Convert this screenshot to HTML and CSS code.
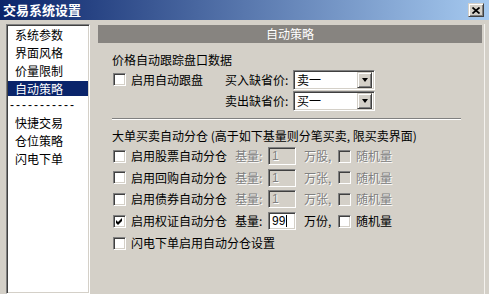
FILE: index.html
```html
<!DOCTYPE html>
<html lang="zh-CN">
<head>
<meta charset="utf-8">
<title>交易系统设置</title>
<link rel="stylesheet" href="styles.css">
</head>
<body>
<div class="window">
  <div class="titlebar">
    <span class="title">交易系统设置</span>
    <span class="close"><svg width="8" height="7" viewBox="0 0 8 7"><path d="M0.5 0.5 L7.5 6.5 M7.5 0.5 L0.5 6.5" stroke="#000" stroke-width="1.7"/></svg></span>
  </div>
  <div class="main">
    <ul class="list">
      <li>系统参数</li>
      <li>界面风格</li>
      <li>价量限制</li>
      <li class="sel">自动策略</li>
      <li class="sep">-----------</li>
      <li>快捷交易</li>
      <li>仓位策略</li>
      <li>闪电下单</li>
    </ul>
    <div class="panel">
      <div class="header">自动策略</div>
      <div class="content">
        <div class="caption">价格自动跟踪盘口数据</div>
        <div class="row">
          <div class="col1"><span class="cb"></span><span class="lbl">启用自动跟盘</span></div>
          <span class="flabel">买入缺省价:</span>
          <div class="select"><span class="sval">卖一</span><span class="sbtn"><span class="tri"></span></span></div>
        </div>
        <div class="row">
          <div class="col1"></div>
          <span class="flabel">卖出缺省价:</span>
          <div class="select"><span class="sval">买一</span><span class="sbtn"><span class="tri"></span></span></div>
        </div>
        <div class="rule"></div>
        <div class="group">大单买卖自动分仓 (高于如下基量则分笔买卖, 限买卖界面)</div>
        <div class="row big">
          <div class="c1"><span class="cb"></span><span class="lbl">启用股票自动分仓</span></div>
          <span class="base dis">基量:</span>
          <span class="edit off">1</span>
          <span class="unit dis">万股,</span>
          <span class="cb off"></span><span class="lbl dis">随机量</span>
        </div>
        <div class="row">
          <div class="c1"><span class="cb"></span><span class="lbl">启用回购自动分仓</span></div>
          <span class="base dis">基量:</span>
          <span class="edit off">1</span>
          <span class="unit dis">万张,</span>
          <span class="cb off"></span><span class="lbl dis">随机量</span>
        </div>
        <div class="row big">
          <div class="c1"><span class="cb"></span><span class="lbl">启用债券自动分仓</span></div>
          <span class="base dis">基量:</span>
          <span class="edit off">1</span>
          <span class="unit dis">万张,</span>
          <span class="cb off"></span><span class="lbl dis">随机量</span>
        </div>
        <div class="row big">
          <div class="c1"><span class="cb"><svg width="7" height="7" viewBox="0 0 7 7"><path d="M0 2 L2 4 L6 0 L6 3 L2 7 L0 5 Z" fill="#000"/></svg></span><span class="lbl">启用权证自动分仓</span></div>
          <span class="base">基量:</span>
          <span class="edit">99<span class="caret"></span></span>
          <span class="unit">万份,</span>
          <span class="cb"></span><span class="lbl">随机量</span>
        </div>
        <div class="row big">
          <div class="c1 wide"><span class="cb"></span><span class="lbl">闪电下单启用自动分仓设置</span></div>
        </div>
      </div>
    </div>
    <div class="edge"></div>
  </div>
</div>
</body>
</html>
```
FILE: styles.css
```css
* {
  box-sizing: border-box;
  margin: 0;
  padding: 0;
}

body {
  margin: 0;
  background: #fff;
  font-family: "Noto Sans CJK SC", "Liberation Sans", sans-serif;
  font-size: 12px;
  color: #000;
}

.window {
  width: 489px;
  height: 294px;
  background: #d4d0c8;
  display: flex;
  flex-direction: column;
}

.titlebar {
  height: 20px;
  flex: none;
  background: linear-gradient(to right, #0a246a 0%, #a6caf0 100%);
  display: flex;
  align-items: center;
  justify-content: space-between;
  padding: 0 5px 0 3px;
}

.title {
  color: #fff;
  font-weight: bold;
  font-size: 13px;
  line-height: 16px;
}

.close {
  width: 16px;
  height: 14px;
  background: #d4d0c8;
  border: 1px solid;
  border-color: #d4d0c8 #404040 #404040 #d4d0c8;
  box-shadow: inset 1px 1px 0 #fff, inset -1px -1px 0 #808080;
  display: flex;
  align-items: center;
  justify-content: center;
}

.main {
  flex: 1;
  display: flex;
  align-items: flex-start;
  padding-top: 4px;
}

.list {
  list-style: none;
  flex: none;
  width: 84px;
  height: 270px;
  margin-left: 6px;
  background: #fff;
  border: 1px solid;
  border-color: #808080 #fff #fff #808080;
  box-shadow: inset 1px 1px 0 #404040, inset -1px -1px 0 #d4d0c8;
  padding: 2px 1px 1px 1px;
}

.list li {
  height: 15px;
  line-height: 15px;
  margin-bottom: 3px;
  padding-left: 7px;
  white-space: nowrap;
}

.list li.sel {
  background: #0a246a;
  color: #fff;
}

.list li.sep {
  height: 13px;
  line-height: 13px;
  padding-left: 2px;
  letter-spacing: 2px;
  font-family: "Liberation Sans", sans-serif;
}

.panel {
  flex: none;
  width: 384px;
  margin-left: 8px;
  margin-top: 1px;
}

.edge {
  flex: none;
  width: 1px;
  height: 270px;
  margin-left: 2px;
  background: #f4f2ee;
}

.header {
  height: 18px;
  line-height: 18px;
  background: #878480;
  color: #fff;
  text-align: center;
}

.content {
  padding-left: 14px;
}

.caption {
  margin-top: 8px;
  height: 18px;
  line-height: 18px;
}

.row {
  display: flex;
  align-items: center;
  height: 21px;
  white-space: nowrap;
}

.row.big {
  height: 22px;
}

.col1 {
  flex: none;
  width: 113px;
  display: flex;
  align-items: center;
}

.c1 {
  flex: none;
  width: 123px;
  display: flex;
  align-items: center;
}

.c1.wide {
  width: 300px;
}

.cb {
  flex: none;
  width: 13px;
  height: 13px;
  margin-left: 1px;
  background: #fff;
  border: 1px solid;
  border-color: #808080 #fff #fff #808080;
  box-shadow: inset 1px 1px 0 #404040, inset -1px -1px 0 #d4d0c8;
  display: flex;
  align-items: center;
  justify-content: center;
}

.cb.off {
  background: #d4d0c8;
}

.lbl {
  margin-left: 5px;
  line-height: 16px;
}

.flabel {
  flex: none;
  width: 68px;
  line-height: 16px;
}

.select {
  flex: none;
  width: 82px;
  height: 20px;
  background: #fff;
  border: 1px solid;
  border-color: #808080 #fff #fff #808080;
  box-shadow: inset 1px 1px 0 #404040, inset -1px -1px 0 #d4d0c8;
  padding: 2px;
  display: flex;
  align-items: center;
  justify-content: space-between;
}

.sval {
  padding-left: 1px;
  line-height: 16px;
}

.sbtn {
  width: 15px;
  height: 16px;
  background: #d4d0c8;
  border: 1px solid;
  border-color: #d4d0c8 #404040 #404040 #d4d0c8;
  box-shadow: inset 1px 1px 0 #fff, inset -1px -1px 0 #808080;
  display: flex;
  align-items: center;
  justify-content: center;
}

.tri {
  width: 0;
  height: 0;
  border-top: 4px solid #000;
  border-left: 3.5px solid transparent;
  border-right: 3.5px solid transparent;
}

.rule {
  margin-top: 7px;
  width: 349px;
  height: 2px;
  border-top: 1px solid #808080;
  border-bottom: 1px solid #fff;
}

.group {
  margin-top: 7px;
  height: 18px;
  line-height: 18px;
  white-space: nowrap;
}

.base {
  flex: none;
  width: 33px;
  line-height: 16px;
}

.edit {
  flex: none;
  width: 28px;
  height: 18px;
  background: #fff;
  border: 1px solid;
  border-color: #808080 #fff #fff #808080;
  box-shadow: inset 1px 1px 0 #404040, inset -1px -1px 0 #d4d0c8;
  padding-left: 3px;
  line-height: 16px;
  font-family: "Liberation Sans", sans-serif;
  display: flex;
  align-items: center;
}

.edit.off {
  background: #d4d0c8;
  color: #808080;
  text-shadow: 1px 1px 0 #fff;
}

.caret {
  display: inline-block;
  width: 1px;
  height: 12px;
  margin-left: 1px;
  background: #000;
}

.unit {
  flex: none;
  width: 33px;
  margin-left: 8px;
  line-height: 16px;
}

.dis {
  color: #808080;
  text-shadow: 1px 1px 0 #fff;
}
```
